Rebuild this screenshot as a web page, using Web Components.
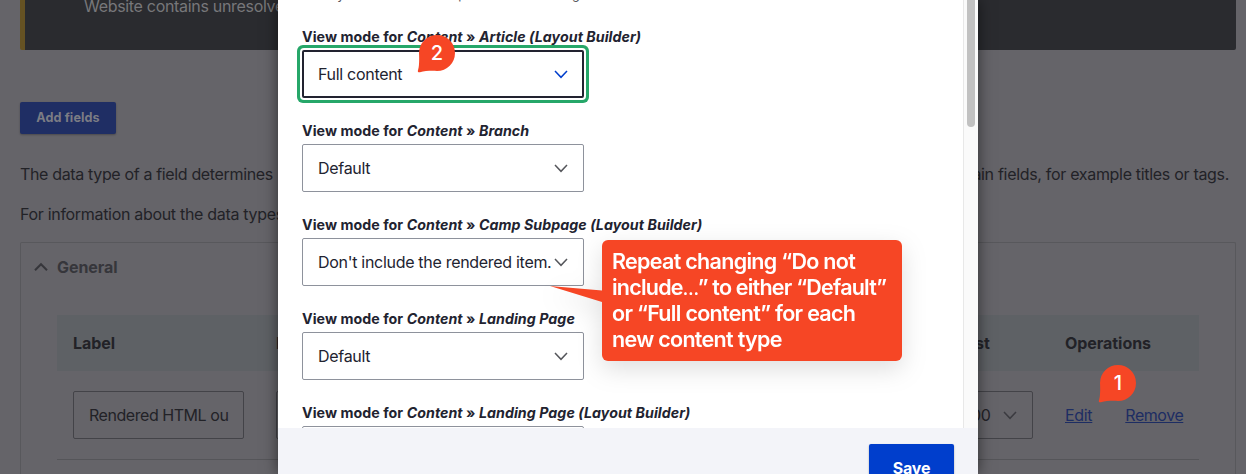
<!DOCTYPE html>
<html lang="en">
<head>
<meta charset="utf-8">
<title>Manage fields</title>
<style>
html,body{margin:0;height:474px;overflow:hidden}
body{background:#656469;font-family:Inter,"Noto Sans",sans-serif;font-size:16px;color:#222330;position:relative}
</style>
</head>
<body>
<fields-page></fields-page>
<settings-dialog>
  <view-mode kind="Article (Layout Builder)" value="Full content" focused></view-mode>
  <view-mode kind="Branch" value="Default"></view-mode>
  <view-mode kind="Camp Subpage (Layout Builder)" value="Don't include the rendered item."></view-mode>
  <view-mode kind="Landing Page" value="Default"></view-mode>
  <view-mode kind="Landing Page (Layout Builder)" value=""></view-mode>
</settings-dialog>
<step-pin style="left:417px;top:35px">2</step-pin>
<step-pin style="left:1098px;top:365px">1</step-pin>
<note-callout><span>Repeat changing “Do not</span><span style="letter-spacing:-.78px">include<span style="font-size:17px;line-height:1;letter-spacing:-1.4px">…</span>” to either “Default”</span><span>or “Full content” for each</span><span>new content type</span></note-callout>
<script>
const define = (name, html) => customElements.define(name, class extends HTMLElement {
  constructor() {
    super();
    this.attachShadow({mode: 'open'}).innerHTML = html;
  }
});

define('fields-page', `<style>
:host{display:flex;flex-direction:column;height:474px;width:1216px;padding-left:20px;color:#222227;white-space:nowrap;overflow:hidden;letter-spacing:-.31px}
:host>*{flex:none}
.msg{height:50px;box-sizing:border-box;background:#2a2b2f;border-left:5px solid #655223;border-radius:0 0 2px 2px;padding-left:59px;line-height:24px;color:#77777a}
.msg span{display:block;margin-top:-6px}
.add{width:96px;height:32px;margin-top:52px;background:#1f2e64;border-radius:2px;box-shadow:0 1px 2px #0004;color:#7b7c84;font-weight:700;font-size:12.64px;line-height:32px;text-align:center;letter-spacing:.1px}
p{margin:0;line-height:24px;display:flex;justify-content:space-between;padding-right:7px}
p.a{margin-top:28px}p.b{margin-top:16px}
.a span:first-child{letter-spacing:-.35px}
.details{margin-top:16px;height:240px;box-sizing:border-box;border:1px solid #58585c;border-bottom:0;border-radius:2px 2px 0 0;padding:0 36px}
.sum{display:flex;align-items:center;height:48px;margin-left:-23px;gap:9px;font-weight:700;color:#36363b;letter-spacing:-.05px}
.row{display:grid;grid-template-columns:203px 669px 120px 1fr;padding-left:16px;align-items:center}
.head{margin-top:24px;height:56px;background:#5e6165;font-weight:700;letter-spacing:-.05px}
.body{height:88px;border-bottom:1px solid #555559}
.in{height:48px;box-sizing:border-box;border:1px solid #434348;border-radius:2px;padding:0 15px;display:flex;align-items:center;justify-content:space-between;overflow:hidden}
.name{letter-spacing:-.45px}
.ops{display:flex;gap:33px;color:#1d2d63;text-decoration:underline}
.ops span:last-child{letter-spacing:-.45px}
</style>
<div class="msg"><span>Website contains unresolved</span></div>
<div class="add">Add fields</div>
<p class="a"><span>The data type of a field determines</span><span>certain fields, for example titles or tags.</span></p>
<p class="b"><span>For information about the data types</span></p>
<div class="details">
 <div class="sum"><svg width="14" height="10" viewBox="0 0 14 10" fill="none" stroke="currentColor" stroke-width="2"><path d="M1 8.3L7 2.2L13 8.3"/></svg>General</div>
 <div class="row head"><span>Label</span><span>Machine name</span><span>Boost</span><span>Operations</span></div>
 <div class="row body"><div class="in name" style="width:171px">Rendered HTML ou</div><div class="in" style="width:171px"></div><div class="in" style="width:88px">1.00<svg width="14" height="9" viewBox="0 0 14 9" fill="none" stroke="#3b3b40" stroke-width="1.5"><path d="M1 1L7 7.3L13 1"/></svg></div><div class="ops"><span>Edit</span><span>Remove</span></div></div>
</div>`);

define('settings-dialog', `<style>
:host{position:absolute;left:278px;top:0;width:700px;height:474px;display:flex;flex-direction:column;background:#fff;box-shadow:0 0 14px rgba(0,0,0,.55)}
.main{height:428px;display:flex;overflow:hidden}
.list{flex:1;padding-left:24px;margin-top:-15px}
.desc{font-size:12.64px;line-height:20px;margin-bottom:19px;color:#55565b;white-space:nowrap;letter-spacing:.01px}
.bar{width:14px;border-left:1px solid #e8e8e8;background:#fafafa;display:flex;justify-content:center}
.thumb{width:8px;height:127px;border-radius:0 0 4px 4px;background:#c1c1c1}
.foot{height:30px;padding:16px 24px 0;background:#f3f4f9;display:flex;justify-content:flex-end;overflow:hidden}
.save{flex:none;width:85px;height:48px;border-radius:2px;background:#003ecc;box-shadow:0 1px 2px #0005;color:#fff;font-weight:700;line-height:48px;text-align:center;letter-spacing:-.2px}
</style>
<div class="main"><div class="list"><div class="desc">"anonymous" role here to prevent data leaking out to unauthorized roles.</div><slot></slot></div><div class="bar"><div class="thumb"></div></div></div>
<div class="foot"><div class="save">Save</div></div>`);

customElements.define('view-mode', class extends HTMLElement {
  connectedCallback() {
    const root = this.attachShadow({mode: 'open'});
    root.innerHTML = `<style>
:host{display:block;height:94px;color:#222330}
.label{font-size:14.22px;font-weight:700;line-height:26px;white-space:nowrap;letter-spacing:.05px}
.select{width:282px;height:48px;box-sizing:border-box;border:1px solid #8e929c;border-radius:2px;padding:0 15px;display:flex;align-items:center;justify-content:space-between;white-space:nowrap;color:#222330;letter-spacing:-.3px}
svg{flex:none;color:#55565b}
:host([focused]) .select{border:2px solid #222330;padding:0 14px;background:#fff;box-shadow:0 0 0 2px #fff,0 0 0 5px #26a769}
:host([focused]) svg{color:#003ecc}
</style>
<div class="label">View mode for <em></em> » <em></em></div>
<div class="select"><span></span><svg width="14" height="9" viewBox="0 0 14 9" fill="none" stroke="currentColor" stroke-width="1.5"><path d="M1 1L7 7.3L13 1"/></svg></div>`;
    const [group, kind] = root.querySelectorAll('em');
    group.textContent = 'Content';
    kind.textContent = this.getAttribute('kind');
    root.querySelector('span').textContent = this.getAttribute('value');
  }
});

define('step-pin', `<style>
:host{position:absolute;width:38px;height:38px;display:grid;color:#fff;font-size:20px;font-weight:500}
svg,div{grid-area:1/1}
div{width:36px;margin-left:2px;line-height:37px;text-align:center}
</style><svg width="38" height="38"><path fill="#f64625" d="M20 0A18 18 0 1 1 20 36C14 35.6 8 36 3 37.2C1.2 37.6 .4 36.6 1 35.2C2.2 32 2.4 25 2 18A18 18 0 0 1 20 0Z"/></svg><div><slot></slot></div>`);

define('note-callout', `<style>
:host{position:absolute;left:550px;top:240px;width:352px;height:121px;display:flex;filter:drop-shadow(0 8px 12px rgba(0,0,0,.13))}
svg{flex:none;width:52px;height:121px}
div{flex:1;min-width:0;display:flex;flex-direction:column;box-sizing:border-box;padding:8px 10px 0;background:#f64625;border-radius:6px;color:#fff;font-weight:600;font-size:21.5px;line-height:26px;letter-spacing:-.7px;white-space:nowrap}
</style><svg viewBox="0 0 52 121"><path fill="#f64625" d="M0 46L52 50.5V62Z"/></svg><div><slot></slot></div>`);
</script>
</body>
</html>
